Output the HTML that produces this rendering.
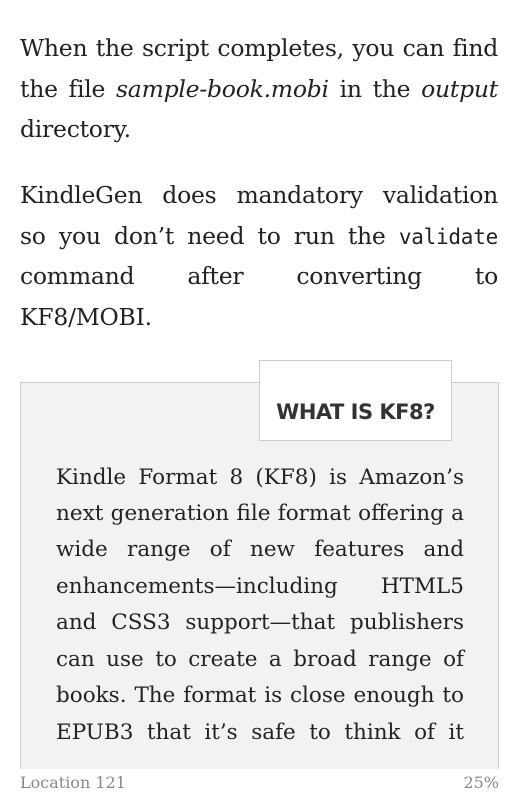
<!DOCTYPE html>
<html><head><meta charset="utf-8"><style>
*{margin:0;padding:0;box-sizing:border-box}
html,body{width:519px;height:800px;background:#fff;overflow:hidden}
body{font-family:"DejaVu Serif","Liberation Serif",serif;color:#222;position:relative}
.l{position:absolute;display:block;white-space:nowrap;text-align:justify;text-align-last:justify}
.p{left:20px;width:478px;font-size:23.5px;letter-spacing:-0.25px;height:40px;line-height:40px}
.b{left:56px;width:408px;font-size:21.5px;height:36px;line-height:36px}
.nl{text-align-last:left}
code{font-family:"DejaVu Sans Mono","Liberation Mono",monospace;font-size:21px}
#box{position:absolute;left:20px;top:382px;width:479px;height:387px;background:#f2f2f2;border:1px solid #ccc;border-bottom:none}
#hd{position:absolute;left:259px;top:360px;width:193px;height:81px;background:#fff;border:1px solid #ccc;font-family:"DejaVu Sans","Liberation Sans",sans-serif;font-weight:bold;font-size:21px;letter-spacing:-0.5px;color:#333;text-align:center;padding-top:21px;line-height:60px}
.f{position:absolute;top:771px;font-size:16px;color:#888;line-height:24px}
</style></head><body>
<span class="l p" style="top:28px">When the script completes, you can find</span>
<span class="l p" style="top:69px">the file <i>sample-book.mobi</i> in the <i>output</i></span>
<span class="l p nl" style="top:109px">directory.</span>
<span class="l p" style="top:175px">KindleGen does mandatory validation</span>
<span class="l p" style="top:216px">so you don’t need to run the <code>validate</code></span>
<span class="l p" style="top:256px">command after converting to</span>
<span class="l p nl" style="top:297px">KF8/MOBI.</span>
<div id="box"></div>
<div id="hd">WHAT IS KF8?</div>
<span class="l b" style="top:460px">Kindle Format 8 (KF8) is Amazon’s</span>
<span class="l b" style="top:496px">next generation file format offering a</span>
<span class="l b" style="top:532px">wide range of new features and</span>
<span class="l b" style="top:569px">enhancements—including HTML5</span>
<span class="l b" style="top:605px">and CSS3 support—that publishers</span>
<span class="l b" style="top:642px">can use to create a broad range of</span>
<span class="l b" style="top:678px">books. The format is close enough to</span>
<span class="l b" style="top:715px">EPUB3 that it’s safe to think of it</span>
<div class="f" style="left:20px">Location 121</div>
<div class="f" style="right:20px">25%</div>
</body></html>
